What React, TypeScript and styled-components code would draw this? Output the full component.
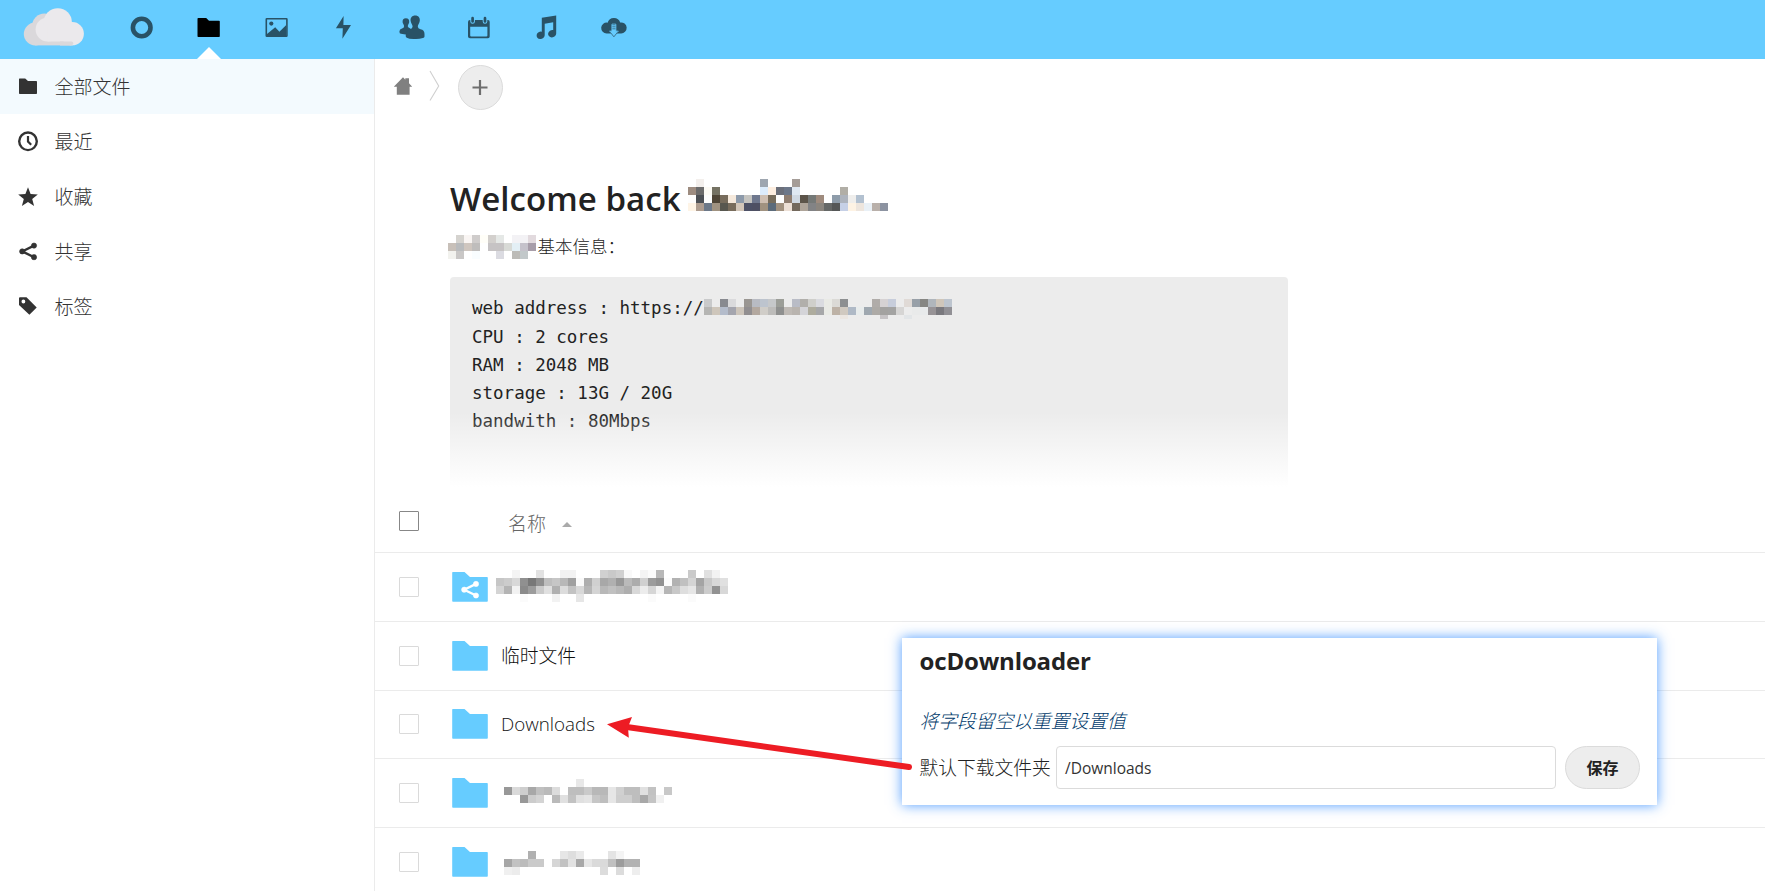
import React from 'react';
import styled, { createGlobalStyle } from 'styled-components';

const Global = createGlobalStyle`
  * { box-sizing: border-box; }
  body {
    margin: 0;
    background: #fff;
    color: #222;
    font-family: "Open Sans", "Noto Sans CJK SC", sans-serif;
    overflow: hidden;
  }
`;

const Page = styled.div`
  position: relative;
  width: 1765px;
  height: 891px;
  overflow: hidden;
  display: flex;
  flex-direction: column;
`;

const Header = styled.header`
  flex: none;
  height: 59px;
  background: #66ccff;
  display: flex;
`;

const Logo = styled.svg`
  flex: none;
  width: 107.75px;
  height: 59px;
`;

const AppLink = styled.a`
  position: relative;
  width: 67.5px;
  height: 59px;
  padding-top: 13px;
  display: flex;
  justify-content: center;
  color: ${(p: { $active?: boolean }) => (p.$active ? '#000' : '#295266')};
`;

const AppIcon = styled.svg`
  width: 28px;
  height: 28px;
  display: block;
`;

const ActiveMark = styled.span`
  position: absolute;
  bottom: 0;
  left: 21.5px;
  border: 12.5px solid transparent;
  border-top-width: 0;
  border-bottom-color: #fff;
`;

const Body = styled.div`
  flex: 1;
  min-height: 0;
  display: flex;
`;

const Sidebar = styled.nav`
  width: 375px;
  flex: none;
  border-right: 1px solid #ebebeb;
`;

const NavItem = styled.a`
  height: 55px;
  padding-left: 16px;
  display: flex;
  align-items: center;
  gap: 14.5px;
  font-size: 19px;
  font-weight: 300;
  color: #333;
  background: ${(p: { $active?: boolean }) => (p.$active ? '#f3fafe' : 'transparent')};
`;

const NavLabel = styled.span`
  padding-bottom: 1px;
`;

const NavIcon = styled.svg`
  width: 24px;
  height: 24px;
  color: #333;
`;

const Main = styled.main`
  flex: 1;
  min-width: 0;
  overflow: hidden;
`;

const Crumbs = styled.div`
  height: 60px;
  padding: 6px 0 0 19px;
  display: flex;
`;

const HomeIcon = styled.svg`
  width: 18px;
  height: 18px;
  margin: 12px 17px 0 0;
`;

const CrumbArrow = styled.svg`
  width: 12px;
  height: 32px;
  margin: 5px 17px 0 0;
`;

const AddButton = styled.button`
  width: 45px;
  height: 45px;
  padding: 0;
  border: 1px solid #dbdbdb;
  border-radius: 50%;
  background: #ededed;
  display: flex;
  align-items: center;
  justify-content: center;
`;

const Readme = styled.section`
  margin-left: 75px;
  padding-top: 55px;
  width: 838px;
`;

const Title = styled.h1`
  margin: 0;
  height: 50px;
  line-height: 50px;
  font-size: 33px;
  font-weight: 600;
  letter-spacing: 0.05px;
  display: flex;
`;

const TitleText = styled.span`
  width: 238px;
  white-space: nowrap;
`;

const Info = styled.p`
  margin: 7px 0 0 -2px;
  height: 30px;
  line-height: 30px;
  font-size: 17.5px;
  font-weight: 300;
  display: flex;
  gap: 1.5px;
`;

const CodeBox = styled.pre`
  position: relative;
  margin: 16px 0 0;
  height: 210px;
  padding: 17px 22px;
  border-radius: 4px;
  background: #ececec;
  font-family: "DejaVu Sans Mono", monospace;
  font-size: 17.5px;
  line-height: 28px;
`;

const CodeLine = styled.div`
  height: 28px;
  display: flex;
  &:first-child { margin-bottom: 1px; }
`;

const Fade = styled.div`
  position: absolute;
  left: 0;
  right: 0;
  bottom: 0;
  height: 75px;
  background: linear-gradient(rgba(255, 255, 255, 0), #fff);
`;

const Pixels = styled.svg`
  display: block;
  flex: none;
  margin-top: ${(p: { $top?: number }) => p.$top || 0}px;
`;

const ListHead = styled.div`
  height: 66px;
  border-bottom: 1px solid #ebebeb;
  padding: 3px 0 0 24px;
  display: flex;
  align-items: center;
  font-size: 19px;
  font-weight: 300;
  color: #666;
`;

const HeadName = styled.span`
  margin: 3px 16px 0 89px;
`;

const SortMark = styled.svg`
  width: 10px;
  height: 5px;
  margin-top: 7px;
`;

const Check = styled.span`
  flex: none;
  width: 20px;
  height: 20px;
  border-radius: 1px;
  border: 1px solid ${(p: { $dark?: boolean }) => (p.$dark ? '#878787' : '#dadada')};
`;

const Row = styled.div`
  height: 68.75px;
  border-bottom: 1px solid #ebebeb;
  padding-left: 24px;
  display: flex;
  align-items: center;
`;

const FolderIcon = styled.svg`
  width: 36px;
  height: 30px;
  margin-left: 33px;
  flex: none;
`;

const FileName = styled.span`
  margin: -2px 0 0 ${(p: { $gap: number }) => p.$gap}px;
  font-size: 18.75px;
  font-weight: 300;
  color: #111;
`;

const Dialog = styled.section`
  position: absolute;
  left: 902px;
  top: 638px;
  width: 755px;
  height: 167px;
  padding: 5px 17px 0 17.5px;
  background: #fff;
  box-shadow: 0 0 12px rgba(50, 140, 255, 0.85);
`;

const DialogTitle = styled.h2`
  margin: 0;
  height: 36px;
  line-height: 36px;
  font-size: 24px;
  font-weight: 700;
  letter-spacing: -0.15px;
`;

const Hint = styled.em`
  display: block;
  margin-top: 27px;
  height: 30px;
  line-height: 30px;
  font-size: 18.75px;
  font-weight: 300;
  color: #003a6b;
`;

const Field = styled.div`
  margin-top: 10px;
  display: flex;
  align-items: center;
  height: 43px;
`;

const Label = styled.label`
  width: 136.5px;
  padding-bottom: 2px;
  font-size: 18.75px;
  font-weight: 300;
`;

const PathBox = styled.div`
  width: 500px;
  height: 43px;
  padding-left: 8px;
  border: 1px solid #dbdbdb;
  border-radius: 4px;
  font-size: 15.5px;
  line-height: 42px;
  color: #333;
`;

const Save = styled.button`
  margin-left: 9px;
  width: 75px;
  height: 43px;
  padding: 0 0 2px;
  border: 1px solid #dbdbdb;
  border-radius: 22px;
  background: #ededed;
  font: 600 16px "Open Sans", "Noto Sans CJK SC", sans-serif;
  color: #222;
`;

const Pointer = styled.svg`
  position: absolute;
  left: 600px;
  top: 710px;
  width: 320px;
  height: 70px;
`;

/* A redacted piece of text: rows of colours, "-" leaves the background. */
type MosaicProps = { rows: string[]; top?: number; height?: number };
const Mosaic = ({ rows, top, height }: MosaicProps) => {
  const grid = rows.map((r) => r.split(' '));
  const cols = Math.max(...grid.map((r) => r.length));
  return (
    <Pixels $top={top} width={cols * 8} height={height || rows.length * 8} shapeRendering="crispEdges">
      {grid.map((r, y) =>
        r.map((c, x) =>
          c === '-' ? null : (
            <rect key={`${x}-${y}`} x={x * 8} y={y * 8} width={8} height={8} fill={'#' + (c.length === 2 ? c + c + c : c)} />
          ),
        ),
      )}
    </Pixels>
  );
};

const userName = [
  '- f3efec - - - - - - - 9ea6b0 - - - a59d98',
  '9d8c80 6b6b6b fcfaf4 757263 - - - - - dcecfc fdeee0 6b6f7a 6c7789 dfe8f2 - - - - - b1aea6',
  'fdfdfd 4b4f54 fdfdfd 4f4536 776c5c f5e9dc 8d9aaa c5c4c0 6f788e cebfb2 776d5c fefefe 8f7e71 cfd8e2 5c5449 757977 9f8b7e - 8e9caa adb3bd efeeec b3c1d0',
  'fef4e6 ad9c8f 6c7888 a09280 58574f 786c5c d2c6b9 4d5166 4e5063 a09280 5c6b7a a29280 ede0d6 73695d aea499 828385 8b857e 666867 555757 c6d0e6 fef3e4 ede5dd e9f0f6 b9b0aa 8c93a1',
];

const siteName = [
  '- d5d3cf f9f5f3 cfcccb fffef8 d3d0cd e5e8e6 - f3f2f5 f3f2f5 e2dade',
  'c8c0b9 b9bbbd cfc6bf bfbdbc - c6c3c4 c6c3c4 d8dad6 e3eff5 c5c2cb a79da9',
  'f2f2ee c9c7c6 - f9fdff - - dbdbe1 - bcbbb7 c2c8ca',
];

const address = [
  'c9cacb - 888a90 dadadc - 9a9692 b8bbc3 bdc4ce c6c8ca 9c9e98 - b9bcc6 b1afab cfcfcb dadbe0 e9eae5 dbdad6 8d8f91 - - - b0aca9 d6d2d3 c7cddb - e0dad6 98a0a8 868683 b0b6bc cfc6ba bdc5cf',
  'b5b5b3 cec6bb b4bccb a4a5ae cdc5bb 918e90 b3a89f d0cdc8 bdbcba 8f908f bfbab5 b9b4af d4d4d8 aeac9e a6a7a9 e9eae5 bdb2a6 d0c9c0 afb9c6 e8ecec 9fa8b0 adaaa6 a3a2a0 a3a3a2 d6d5d4 - e9eaea e8eaeb 979396 7a797e 919095',
  '- - - - - - - - - - - - - - - - - ebe6e1 - - - - c6c3c5 - - e2e5e7',
];

const hiddenA = [
  '- - f4 - - e2 - - f2 f2 - - - d0 c9 d0 f9 - f4 fb b8 - - - ca - e0 f2',
  'c6 cc d8 90 78 90 be c6 b8 a0 fa ae d0 a8 b0 98 ba ac d0 9c 92 fc b2 c0 d4 a4 c8 d8 e0',
  'd4 b4 f2 8a 9c ca e0 b0 dc c2 d8 b6 d4 b8 c0 b8 ae d8 ec d6 f4 b6 c8 de e6 b0 cc 92 d8',
  '- - - fb - - - f2 - - e6 - - - - - - - - fb - - - - fb',
];
const hiddenB = [
  '- - - - - - - - - e8',
  '98 da ce a8 c0 ba dc - be be ca b8 b8 e6 d0 be be e0 c2 - c8',
  '- - 98 cc d4 - ba e0 c2 e0 e4 c6 be e6 ce ce be a8 c4 f0',
];
const hiddenC = [
  '- - - b0 - - - e6 de ea - - - e4 f4',
  'a6 c2 bc ca ca - d6 c2 e2 a8 e6 da da c0 9c b2 b2',
  'f0 ec - - - - - - - - - - dc - dc - ee',
];

const Share = ({ fill }: { fill: string }) => (
  <g fill={fill} stroke={fill}>
    <path d="M15 3.2L3.2 9L15 14.8" fill="none" strokeWidth="2.3" />
    <circle cx="15" cy="3.2" r="2.6" strokeWidth="0.6" />
    <circle cx="3.2" cy="9" r="2.6" strokeWidth="0.6" />
    <circle cx="15" cy="14.8" r="2.6" strokeWidth="0.6" />
  </g>
);

const Folder = ({ shared }: { shared?: boolean }) => (
  <FolderIcon viewBox="0 0 36 30">
    <path d="M.8 0H12.5L18 5H35Q35.8 5 35.8 5.8V29Q35.8 29.8 35 29.8H1Q.2 29.8 .2 29V.8Q.2 0 .8 0Z" fill="#66ccff" />
    {shared && (
      <g transform="translate(9 8.7)">
        <Share fill="#fff" />
      </g>
    )}
  </FolderIcon>
);

/* Each app glyph is drawn in a 28 x 28 box. */
const apps: { active?: boolean; art: React.ReactNode }[] = [
  { art: <circle cx="13.7" cy="14.5" r="8.8" fill="none" stroke="currentColor" strokeWidth="4.6" /> },
  { active: true, art: <path d="M3.3 5H11.2L14 7.8H24Q24.8 7.8 24.8 8.6V23.2Q24.8 24 24 24H3.3Q2.5 24 2.5 23.2V5.8Q2.5 5 3.3 5Z" fill="currentColor" /> },
  {
    art: (
      <g>
        <rect x="3.3" y="5.8" width="20.6" height="17.4" fill="none" stroke="currentColor" strokeWidth="1.6" rx=".5" />
        <circle cx="8.3" cy="10.6" r="2.1" fill="currentColor" />
        <path d="M4 23V21L12.2 14.3L16.4 18.8L23 12.3V23Z" fill="currentColor" />
      </g>
    ),
  },
  { art: <path d="M13.6 3L5.9 15.2H12.8L12.4 25.7L21 12.1H13.4Z" fill="currentColor" /> },
  {
    art: (
      <g fill="currentColor">
        <path d="M7.9 5.2C10.3 5.2 11.4 6.8 11.2 9.2C11 10.8 9.8 11.6 9.8 13.2C10 15 13 14.8 13 17V21.5H7.5L3 20.8Q1.3 20.5 1.4 18.4Q1.5 16.2 4 15.6Q6.1 15 6.1 13.2C6.1 11.6 4.8 10.8 4.6 9.2C4.4 6.8 5.5 5.2 7.9 5.2Z" />
        <path d="M17.2 2.6C20.4 2.6 22 4.8 21.8 7.8C21.5 10.6 19.8 11.6 19.8 13.6Q19.8 15.6 22.5 16.2Q26.5 17 26.5 21V23.4Q26.4 24.6 25 24.9Q21 26.2 17 26Q11 26.2 8.8 24.8Q7.6 24.2 7.7 22.8Q7.8 17.4 12 16.2Q14.6 15.6 14.6 13.6C14.6 11.6 12.9 10.6 12.6 7.8C12.4 4.8 14 2.6 17.2 2.6Z" />
      </g>
    ),
  },
  {
    art: (
      <g>
        <path d="M5 7H23Q24.7 7 24.7 9V23.5Q24.7 25.3 23 25.3H5Q3 25.3 3 23.5V9Q3 7 5 7ZM5.2 13.7V22.4Q5.2 23.4 6.2 23.4H21.4Q22.4 23.4 22.4 22.4V13.7Z" fill="currentColor" fillRule="evenodd" />
        <path d="M7.6 4.8V8.5M20 4.8V8.5" stroke="#66ccff" strokeWidth="4.6" strokeLinecap="round" />
        <path d="M7.6 5.2V8.5M20 5.2V8.5" stroke="currentColor" strokeWidth="2.7" strokeLinecap="round" />
      </g>
    ),
  },
  {
    art: (
      <path d="M8.8 4.8L23.2 2.6V20.5A4.1 3.7 -20 1 1 20.2 17V9.3L11.7 10.7V22.3A4.1 3.7 -20 1 1 8.8 18.7Z" fill="currentColor" />
    ),
  },
  {
    art: (
      <g>
        <path d="M6.8 20.4A5.4 5.4 0 1 1 7.6 9.7A6.6 6.6 0 0 1 20.2 9.5A5.5 5.5 0 1 1 20.8 20.4Z" fill="currentColor" />
        <path d="M12 11.2H15.8V18.2H18.4L13.9 23.6L9.4 18.2H12Z" fill="#66ccff" stroke="#66ccff" strokeWidth="1" />
        <path d="M12.3 11.8H15.5M12.3 13.8H15.5M12.3 15.8H15.5" stroke="#295266" strokeWidth=".7" />
        <path d="M9.4 18.2L13.9 23.8L18.4 18.2" fill="none" stroke="#295266" strokeWidth=".7" />
      </g>
    ),
  },
];

const navItems: { label: string; art: React.ReactNode }[] = [
  { label: '全部文件', art: <path d="M3.6 3.5H9.2L12 6H20.2Q21 6 21 6.8V18.2Q21 19 20.2 19H3.8Q3 19 3 18.2V4.1Q3 3.5 3.6 3.5Z" fill="currentColor" /> },
  {
    label: '最近',
    art: (
      <g fill="none" stroke="currentColor">
        <circle cx="12" cy="11.3" r="8.8" strokeWidth="2.4" />
        <path d="M12 6V11.6L15.2 14.8" strokeWidth="2.2" />
      </g>
    ),
  },
  { label: '收藏', art: <path d="M12 2.3L14.6 9.1L21.8 9.5L16.2 14L18.1 21L12 17L5.9 21L7.8 14L2.2 9.5L9.4 9.1Z" fill="currentColor" /> },
  {
    label: '共享',
    art: (
      <g transform="translate(3 2.4)">
        <Share fill="#333" />
      </g>
    ),
  },
  { label: '标签', art: <path d="M4 2.3H10.5L20.7 12.4L13.4 19.7L3 10V3.3Q3 2.3 4 2.3ZM7.4 4.6A1.9 1.9 0 1 0 7.4 8.4A1.9 1.9 0 1 0 7.4 4.6Z" fill="currentColor" fillRule="evenodd" /> },
];

const files: { shared?: boolean; gap: number; name: React.ReactNode }[] = [
  { shared: true, gap: 8, name: <Mosaic rows={hiddenA} top={1} /> },
  { gap: 13, name: '临时文件' },
  { gap: 13, name: 'Downloads' },
  { gap: 16, name: <Mosaic rows={hiddenB} top={-2} /> },
  { gap: 16, name: <Mosaic rows={hiddenC} top={4} /> },
];

export default function App() {
  return (
    <Page>
      <Global />
      <Header>
        <Logo viewBox="0 0 107.75 59">
          <g fill="#dad8db">
            <circle cx="35.2" cy="34" r="11.4" />
            <circle cx="44.5" cy="26" r="12.5" />
            <rect x="35.2" y="30" width="38" height="15.4" />
          </g>
          <g fill="#ebe9ec">
            <circle cx="47.6" cy="29.5" r="12" />
            <circle cx="57.8" cy="22.3" r="14.1" />
            <circle cx="72.3" cy="33.7" r="11.6" />
            <rect x="47.6" y="27" width="24" height="14.5" />
          </g>
          <path d="M60 41.4H71.5Q73.3 41.6 73.2 43.2Q73 45.4 70.8 45.4H60Z" fill="#dad8db" />
        </Logo>
        {apps.map((a, i) => (
          <AppLink key={i} $active={a.active}>
            <AppIcon viewBox="0 0 28 28">{a.art}</AppIcon>
            {a.active && <ActiveMark />}
          </AppLink>
        ))}
      </Header>
      <Body>
        <Sidebar>
          {navItems.map((n, i) => (
            <NavItem key={n.label} $active={i === 0}>
              <NavIcon viewBox="0 0 24 24">{n.art}</NavIcon>
              <NavLabel>{n.label}</NavLabel>
            </NavItem>
          ))}
        </Sidebar>
        <Main>
          <Crumbs>
            <HomeIcon viewBox="0 0 18 18">
              <path d="M9 .3L11.3 2.7V1.2H15V6.3L18.4 9.8H15.6V17.8H2.8V9.8H-.2Z" fill="#808080" />
            </HomeIcon>
            <CrumbArrow viewBox="0 0 12 32">
              <path d="M1 1L9.7 16L1 30.5" fill="none" stroke="#cfcfcf" strokeWidth="1.1" />
            </CrumbArrow>
            <AddButton>
              <svg width="17" height="17" viewBox="0 0 17 17">
                <path d="M8 1V16M.5 8.5H15.5" stroke="#6e6e6e" strokeWidth="2.2" />
              </svg>
            </AddButton>
          </Crumbs>
          <Readme>
            <Title>
              <TitleText>Welcome back</TitleText>
              <Mosaic rows={userName} top={5} />
            </Title>
            <Info>
              <Mosaic rows={siteName} top={4} />
              <span>基本信息：</span>
            </Info>
            <CodeBox>
              <CodeLine>
                {'web address : https://'}
                <Mosaic rows={address} top={5} height={20} />
              </CodeLine>
              <CodeLine>CPU : 2 cores</CodeLine>
              <CodeLine>RAM : 2048 MB</CodeLine>
              <CodeLine>storage : 13G / 20G</CodeLine>
              <CodeLine>bandwith : 80Mbps</CodeLine>
              <Fade />
            </CodeBox>
          </Readme>
          <ListHead>
            <Check $dark />
            <HeadName>名称</HeadName>
            <SortMark viewBox="0 0 10 5">
              <path d="M5 0L10 5H0Z" fill="#aaa" />
            </SortMark>
          </ListHead>
          {files.map((f, i) => (
            <Row key={i}>
              <Check />
              <Folder shared={f.shared} />
              <FileName $gap={f.gap}>{f.name}</FileName>
            </Row>
          ))}
        </Main>
      </Body>
      <Dialog>
        <DialogTitle>ocDownloader</DialogTitle>
        <Hint>将字段留空以重置设置值</Hint>
        <Field>
          <Label>默认下载文件夹</Label>
          <PathBox>/Downloads</PathBox>
          <Save>保存</Save>
        </Field>
      </Dialog>
      <Pointer viewBox="600 710 320 70">
        <path d="M625 726.8L909 767" stroke="#ed1c24" strokeWidth="6" strokeLinecap="round" />
        <path d="M607 724.3L632 717L628 727.2L628.8 737.8Z" fill="#ed1c24" />
      </Pointer>
    </Page>
  );
}
